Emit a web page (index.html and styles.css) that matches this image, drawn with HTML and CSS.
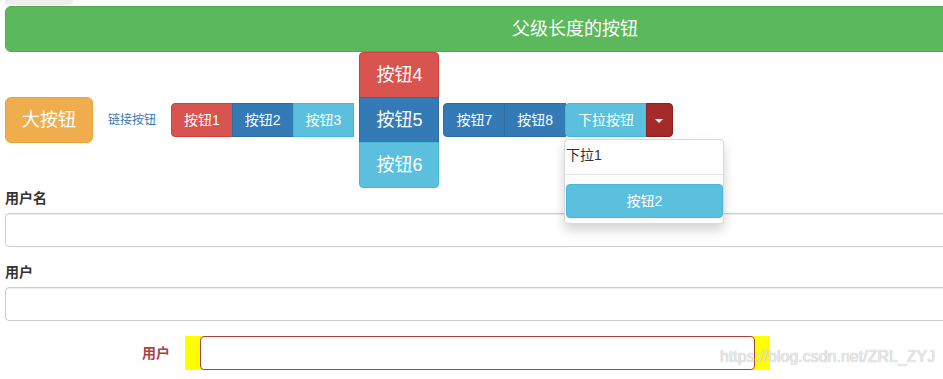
FILE: index.html
```html
<!DOCTYPE html>
<html lang="zh-CN">
<head>
    <meta charset="UTF-8">
    <meta name="viewport" content="width=device-width, initial-scale=1.0">
    <title>按钮与表单</title>
    <link rel="stylesheet" href="styles.css">
</head>
<body>
    <div class="container">
        <div class="well-tail"></div>

        <button class="btn btn-lg btn-success btn-block">父级长度的按钮</button>

        <div class="btn-row">
            <button class="btn btn-lg btn-warning">大按钮</button>
            <button class="btn btn-link">链接按钮</button>

            <div class="btn-group">
                <button class="btn btn-danger">按钮1</button>
                <button class="btn btn-primary">按钮2</button>
                <button class="btn btn-info">按钮3</button>
            </div>

            <div class="btn-group-vertical">
                <button class="btn btn-lg btn-danger">按钮4</button>
                <button class="btn btn-lg btn-primary">按钮5</button>
                <button class="btn btn-lg btn-info">按钮6</button>
            </div>

            <div class="btn-group">
                <button class="btn btn-primary">按钮7</button>
                <button class="btn btn-primary">按钮8</button>
                <div class="btn-group dropdown">
                    <button class="btn btn-info">下拉按钮</button>
                    <button class="btn btn-dark dropdown-toggle"><span class="caret"></span></button>
                    <ul class="dropdown-menu">
                        <li>下拉1</li>
                        <li class="divider"></li>
                        <li><button class="btn btn-info btn-block">按钮2</button></li>
                    </ul>
                </div>
            </div>
        </div>

        <form class="user-form">
            <div class="form-group">
                <label>用户名</label>
                <input type="text" class="form-control">
            </div>
            <div class="form-group">
                <label>用户</label>
                <input type="text" class="form-control">
            </div>
            <div class="form-group row has-error">
                <label class="col-label">用户</label>
                <div class="col-input">
                    <input type="text" class="form-control">
                </div>
            </div>
        </form>
    </div>

    <div class="watermark">https://blog.csdn.net/ZRL_ZYJ</div>
</body>
</html>
```

FILE: styles.css
```css
* {
    margin: 0;
    padding: 0;
    box-sizing: border-box;
}

body {
    font-family: 'Liberation Sans', 'Noto Sans CJK SC', sans-serif;
    font-size: 14px;
    line-height: 20px;
    color: #333;
    background: #fff;
    overflow: hidden;
    position: relative;
    height: 379px;
}

.container {
    width: 1140px;
    margin-left: 5px;
}

.well-tail {
    width: 68px;
    height: 5px;
    margin-bottom: 1px;
    background: #eee;
    border-radius: 0 0 4px 4px;
}

/* botões */
.btn {
    display: inline-block;
    padding: 6px 12px;
    font-family: inherit;
    font-size: 14px;
    line-height: 20px;
    text-align: center;
    white-space: nowrap;
    border: 1px solid transparent;
    border-radius: 4px;
    color: #fff;
    background: none;
    cursor: pointer;
}

.btn-lg {
    padding: 10px 16px;
    font-size: 18px;
    line-height: 24px;
    border-radius: 6px;
}

.btn-block {
    display: block;
    width: 100%;
}

.btn-success { background: #5cb85c; border-color: #4cae4c; }
.btn-warning { background: #f0ad4e; border-color: #eea236; }
.btn-danger  { background: #d9534f; border-color: #d43f3a; }
.btn-primary { background: #337ab7; border-color: #2e6da4; }
.btn-info    { background: #5bc0de; border-color: #46b8da; }
.btn-dark    { background: #a52a2a; border-color: #8b2020; }

.btn-link {
    color: #337ab7;
    font-size: 12px;
    padding-left: 10px;
    padding-right: 10px;
}

.btn-row {
    display: flex;
    align-items: center;
    gap: 4px;
}

.btn-group {
    display: flex;
    position: relative;
}

.btn-group > .btn,
.btn-group > .btn-group > .btn {
    border-radius: 0;
    margin-left: -1px;
}

.btn-group > .btn:first-child {
    margin-left: 0;
    border-radius: 4px 0 0 4px;
}

.btn-group > .btn-group {
    margin-left: -1px;
}

.btn-group > .btn-group > .btn:first-child {
    margin-left: 0;
}

.btn-group > .btn-group:last-child > .btn:last-of-type {
    border-radius: 0 4px 4px 0;
}

.btn-group-vertical {
    display: flex;
    flex-direction: column;
    margin-left: 1px;
}

.btn-group-vertical > .btn {
    width: 80px;
    border-radius: 0;
    margin-top: -1px;
}

.btn-group-vertical > .btn:first-child {
    margin-top: 0;
    border-radius: 4px 4px 0 0;
}

.btn-group-vertical > .btn:last-child {
    border-radius: 0 0 4px 4px;
}

.dropdown-toggle {
    padding-left: 8px;
    padding-right: 9px;
}

.caret {
    display: inline-block;
    width: 0;
    height: 0;
    vertical-align: middle;
    border-top: 4px solid #fff;
    border-left: 4px solid transparent;
    border-right: 4px solid transparent;
}

.dropdown-menu {
    position: absolute;
    top: 100%;
    left: -1px;
    margin-top: 2px;
    min-width: 160px;
    padding: 5px 0;
    list-style: none;
    background: #fff;
    border: 1px solid rgba(0, 0, 0, 0.15);
    border-radius: 4px;
    box-shadow: 0 6px 12px rgba(0, 0, 0, 0.175);
    z-index: 10;
}

.dropdown-menu li {
    padding-left: 1px;
}

.dropdown-menu .divider {
    height: 1px;
    margin: 9px 0;
    background: #e5e5e5;
    padding: 0;
}

.dropdown-menu .btn-block {
    border-radius: 4px;
}

/* formulário */
.form-group {
    margin-bottom: 15px;
}

.form-group label {
    display: block;
    margin-bottom: 5px;
    font-weight: bold;
}

.form-control {
    display: block;
    width: 100%;
    height: 34px;
    padding: 6px 12px;
    font-family: inherit;
    font-size: 14px;
    border: 1px solid #ccc;
    border-radius: 4px;
    box-shadow: inset 0 1px 1px rgba(0, 0, 0, 0.075);
}

.row {
    display: flex;
    margin-left: -15px;
    margin-right: -15px;
}

.row .col-label {
    width: 195px;
    padding: 7px 15px 0;
    margin-bottom: 0;
    text-align: right;
}

.row .col-input {
    width: 585px;
    padding: 0 15px;
    background: yellow;
}

.has-error label {
    color: #a94442;
}

.has-error .form-control {
    border-color: #a94442;
}

.watermark {
    position: absolute;
    left: 720px;
    top: 346px;
    font-family: 'Liberation Sans', sans-serif;
    font-size: 16px;
    line-height: 22px;
    white-space: nowrap;
    color: #eaeaea;
    text-shadow: 0 0 1px rgba(0, 0, 0, 0.35);
    pointer-events: none;
}
```
